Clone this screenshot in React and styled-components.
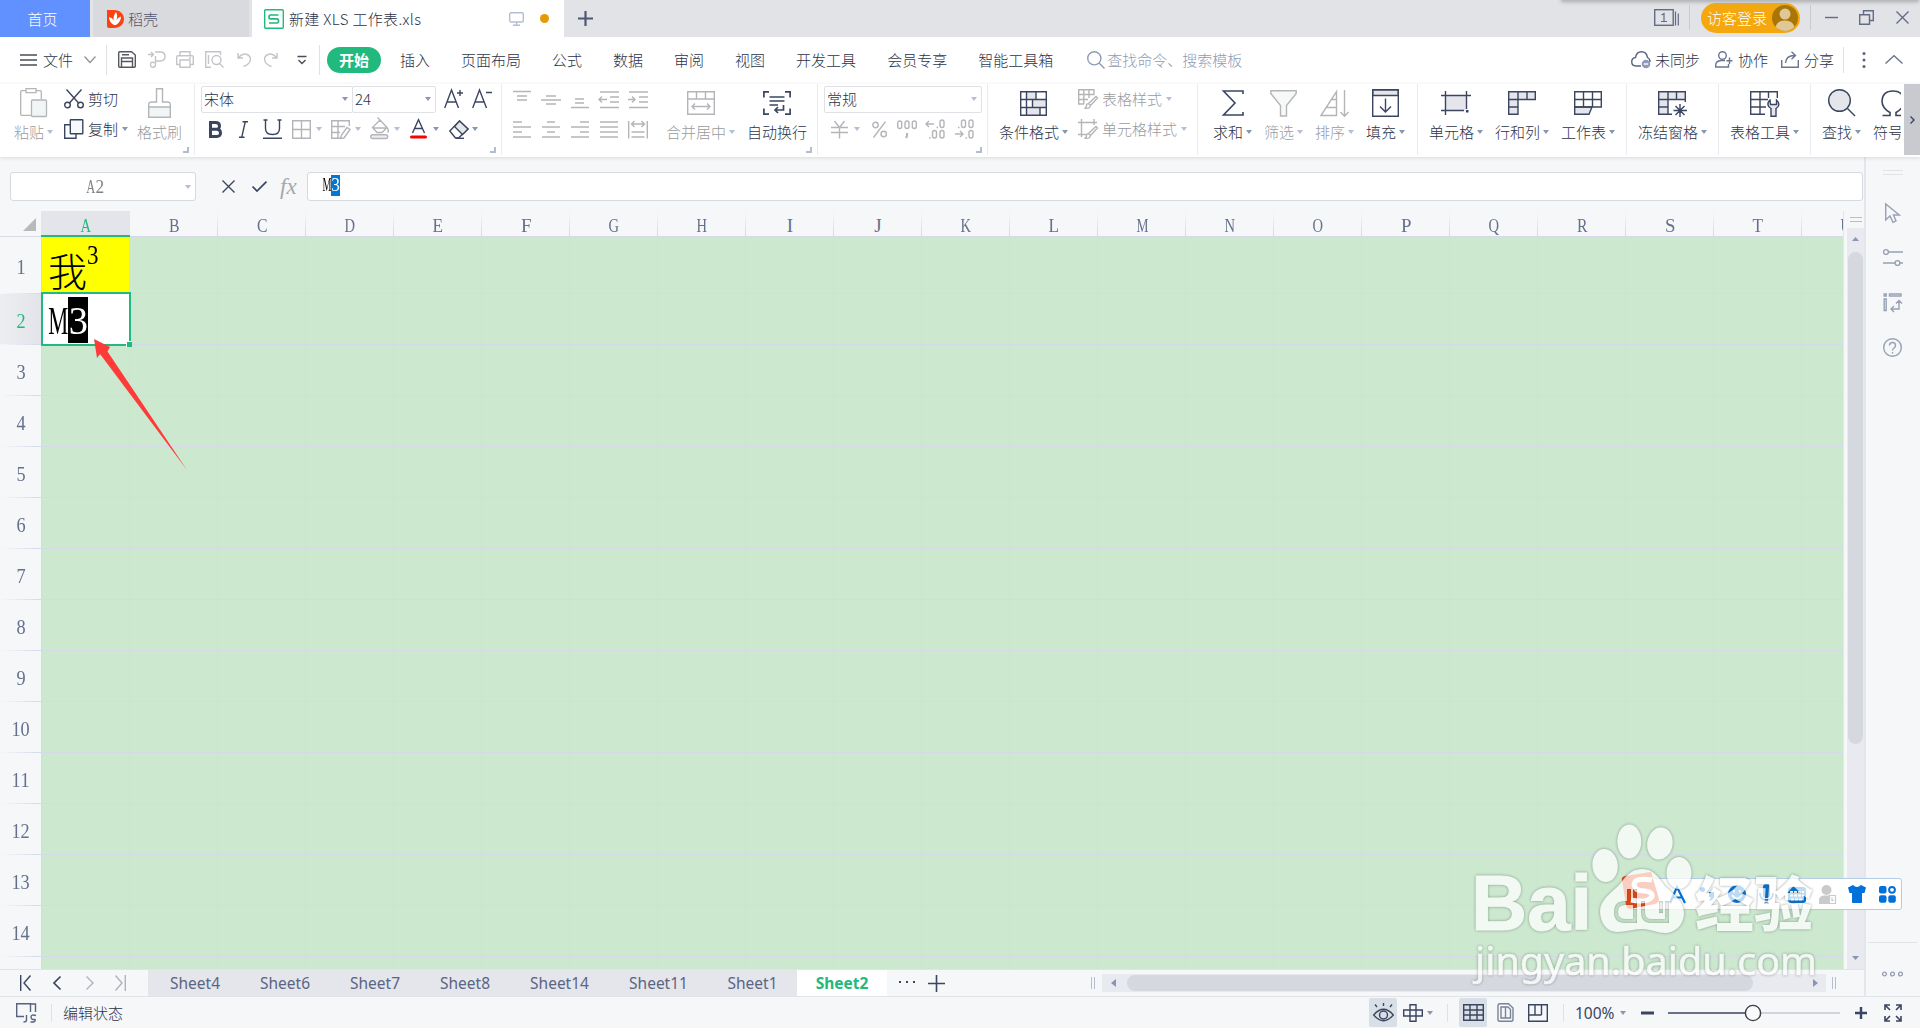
import React from 'react'
import styled, { createGlobalStyle } from 'styled-components';

const INK = '#3b4560';
const MUTED = '#b3b5b8';
const GREEN = '#21b97d';
const LINE = '#d5d9e8';
const PANEL = '#f5f7f9';

const GlobalStyle = createGlobalStyle`
  * {
    box-sizing: border-box;
  }

  body {
    margin: 0;
    overflow: hidden;
    background: ${PANEL};
    font-family: 'Noto Sans', 'Noto Sans CJK SC', sans-serif;
    font-size: 15px;
    line-height: 20px;
    color: ${INK};
  }
`;

const Window = styled.div`
  position: relative;
  display: flex;
  flex-direction: column;
  width: 1920px;
  height: 1028px;
  overflow: hidden;
  white-space: nowrap;
`;

const Svg = styled.svg`
  display: block;
  flex: none;
  overflow: visible;
  margin-left: ${props => props.$ml || 0}px;
  color: ${props => props.$color || INK};
`;

function Glyph({ w, h, ml, color, sw = 1.4, children }) {
  return (
    <Svg
      width={w}
      height={h}
      viewBox={`0 0 ${w} ${h}`}
      fill="none"
      stroke="currentColor"
      strokeWidth={sw}
      $ml={ml}
      $color={color}
    >
      {children}
    </Svg>
  )
}

const Caret = styled.i`
  flex: none;
  width: 0;
  height: 0;
  margin-left: ${props => props.$ml || 0}px;
  border: 3px solid transparent;
  border-top: 4px solid ${props => props.$muted ? '#b4bed5' : '#8895b5'};
  border-bottom: 0;
`;

const Text = styled.span`
  flex: none;
  font-family: 'Noto Sans CJK SC', sans-serif;
  font-size: 15px;
  font-weight: 300;
  line-height: 20px;
  letter-spacing: ${props => props.$spacing || 0}px;
  margin-left: ${props => props.$ml || 0}px;
  color: ${props => props.$muted ? '#9a9ba0' : props.$color || '#2b3348'};
`;

const Rule = styled.div`
  flex: none;
  width: 1px;
  height: ${props => props.$h}px;
  margin-left: ${props => props.$ml || 0}px;
  background: ${props => props.$color || '#dfe1e5'};
`;

/* ---------- title bar ---------- */

const TitleBar = styled.div`
  display: flex;
  flex: none;
  height: 37px;
  background: #e2e3e6;
`;

const HomeTab = styled.div`
  display: flex;
  align-items: center;
  justify-content: center;
  width: 90px;
  padding: 0 5px 0 0;
  background: #6190ff;
`;

const DocTab = styled.div`
  display: flex;
  align-items: center;
  width: ${props => props.$w}px;
  margin-left: 3px;
  padding-left: ${props => props.$pad}px;
  background: ${props => props.$active ? '#ffffff' : '#d9dadd'};
`;

const Dot = styled.div`
  width: 9px;
  height: 9px;
  margin-left: 16px;
  border-radius: 50%;
  background: #e69a05;
`;

const TitleRight = styled.div`
  display: flex;
  align-items: center;
  height: 35px;
  margin-left: auto;
  padding-right: 11px;
`;

const LoginPill = styled.div`
  display: flex;
  align-items: center;
  width: 99px;
  height: 30px;
  margin-left: 11px;
  padding-left: 6px;
  border-radius: 15px;
  background: #f5a80d;
`;

const DropShade = styled.div`
  position: absolute;
  top: -4px;
  left: 1562px;
  width: 356px;
  height: 5px;
  background: #b9babc;
  box-shadow: 0 0 4px 1px #a9aaac;
`;

function TitleTabs() {
  return (
    <>
      <HomeTab><Text $color="#ffffff">首页</Text></HomeTab>
      <DocTab $w={156} $pad={14}>
        <Glyph w={17} h={19} sw={0}>
          <path d="M0 1H7C13 1 17 5 17 10S13 19 7 19H2Q0 19 0 17Z" fill="#fa4310" />
          <path d="M7 16Q2 13 2 8Q6 9 6.500 12Q6 7 9 3Q11 6 9.500 11Q11 8 14 7.500Q14 13 9 16Z" fill="#fff" />
        </Glyph>
        <Text $ml={4} $color="#50566c">稻壳</Text>
      </DocTab>
      <DocTab $w={312} $pad={12} $active>
        <Glyph w={20} h={20} color={GREEN}>
          <rect x=".7" y=".7" width="18.600" height="18.600" rx="1" />
          <path d="M14.500 6H6.500Q5 6 5 8T6.500 9.900H13Q14.500 9.900 14.500 12T13 14H5" strokeWidth="1.700" />
        </Glyph>
        <Text $ml={5} $spacing={0.35}>新建 XLS 工作表.xls</Text>
        <Glyph w={15} h={14} ml={88} color="#b4bdd2">
          <rect x=".7" y=".7" width="13.600" height="9.300" rx="1.500" />
          <path d="M7.500 10V13M4 13.300H11" />
        </Glyph>
        <Dot />
      </DocTab>
      <Glyph w={15} h={37} ml={14} sw={2.2} color="#4d5876">
        <path d="M0 18.500H15M7.500 11V26" />
      </Glyph>
    </>
  )
}

function TitleActions() {
  return (
    <TitleRight>
      <Glyph w={25} h={17} color="#626c86">
        <rect x=".7" y=".7" width="18.500" height="15.600" />
        <path d="M21.500 2.500V16.500M24.300 4.500V16.500M7.500 6L10 4.500V12.500M7 12.500H13" strokeWidth="1.200" />
      </Glyph>
      <Rule $h={25} $ml={10} $color="#c9cbd0" />
      <LoginPill>
        <Text $color="#ffffff">访客登录</Text>
        <Glyph w={26} h={26} ml={5} sw={0}>
          <circle cx="13" cy="13" r="13" fill="#a97506" />
          <circle cx="13" cy="9" r="5.500" fill="#e0c896" />
          <path d="M3.500 22Q5 15.500 13 15.500T22.500 22Q18 26 13 26T3.500 22Z" fill="#e0c896" />
        </Glyph>
      </LoginPill>
      <Rule $h={25} $ml={10} $color="#c9cbd0" />
      <Glyph w={13} h={14} ml={14} color="#626c86"><path d="M0 6.500H13" /></Glyph>
      <Glyph w={15} h={15} ml={21} color="#626c86">
        <path d="M.7 4.700H10.500V14.300H.7ZM4.500 4.700V.7H14.300V10.500H10.500" />
      </Glyph>
      <Glyph w={13} h={13} ml={22} color="#626c86"><path d="M.5 .5L12.500 12.500M12.500 .5L.5 12.500" /></Glyph>
    </TitleRight>
  )
}

/* ---------- menu row ---------- */

const MenuRow = styled.div`
  display: flex;
  flex: none;
  align-items: center;
  height: 47px;
  padding: 0 0 2px 20px;
  background: #ffffff;
`;

const ActiveMenu = styled.div`
  display: flex;
  align-items: center;
  justify-content: center;
  width: 54px;
  height: 26px;
  margin-left: 7px;
  border-radius: 13px;
  background: ${GREEN};

  ${Text} {
    font-weight: 700;
  }
`;

const MenuItems = styled.div`
  display: flex;
  gap: 31px;
  margin-left: 19px;
`;

const MenuRight = styled.div`
  display: flex;
  align-items: center;
  margin-left: auto;
  padding-right: 17px;
`;

const MENUS = ['插入', '页面布局', '公式', '数据', '审阅', '视图', '开发工具', '会员专享', '智能工具箱'];

function QuickAccess() {
  return (
    <>
      <Glyph w={17} h={12} color="#4a4d55"><path d="M0 1H17M0 6H17M0 11H17" /></Glyph>
      <Text $ml={6}>文件</Text>
      <Glyph w={12} h={7} ml={11} color="#8d9096" sw={1.2}><path d="M.5 .5L6 6.500L11.500 .5" /></Glyph>
      <Rule $h={30} $ml={10} />
      <Glyph w={18} h={17} ml={11} color="#55585f">
        <path d="M.7 1.700Q.7 .7 1.700 .7H13.500L17.300 4V15.300Q17.300 16.300 16.300 16.300H1.700Q.7 16.300 .7 15.300ZM3.500 16V7H14.500V16M3.500 10.500H14.500M4 3.700H11" />
      </Glyph>
      <Glyph w={18} h={17} ml={12} color="#c4c5c8">
        <path d="M0 3.500H5M3 1L5.500 3.500L3 6M7 1H12.500Q17 1 17 5.500T12.500 10H7.500V13.500Q7.500 16.300 5 16.300T2.500 13.500T5 11.500H7.500M7.500 5V10" />
      </Glyph>
      <Glyph w={18} h={17} ml={10} color="#c4c5c8">
        <path d="M4 4.500V.7H14V4.500M4 13.500H.7V6Q.7 4.700 2 4.700H16Q17.300 4.700 17.300 6V13.500H14M4 9H14V16.300H4ZM13 7H15" />
      </Glyph>
      <Glyph w={19} h={17} ml={11} color="#c4c5c8">
        <path d="M6 16.300H.7V.7H15.500V4M3.500 4V13M14.500 12.500L18.500 16.500" />
        <circle cx="11.500" cy="9" r="4.500" />
      </Glyph>
      <Glyph w={14} h={15} ml={13} color="#c4c5c8"><path d="M1 1V6H6M1.500 5.500Q6 .8 10 2.500T13.300 8Q13 12 6.500 14.500" /></Glyph>
      <Glyph w={14} h={15} ml={13} color="#c4c5c8"><path d="M13 1V6H8M12.500 5.500Q8 .8 4 2.500T.7 8Q1 12 7.500 14.500" /></Glyph>
      <Glyph w={10} h={10} ml={19} color="#4a4d55"><path d="M.5 1.500H9.500M1.500 5L5 8.500L8.500 5" /></Glyph>
      <Rule $h={30} $ml={12} />
    </>
  )
}

function Menu() {
  return (
    <MenuRow>
      <QuickAccess />
      <ActiveMenu><Text $color="#ffffff">开始</Text></ActiveMenu>
      <MenuItems>
        {MENUS.map(name => <Text key={name}>{name}</Text>)}
      </MenuItems>
      <Glyph w={18} h={18} ml={34} color="#8f9bb8">
        <circle cx="7.300" cy="7.300" r="6.600" />
        <path d="M12 12L17.500 17.500" />
      </Glyph>
      <Text $ml={2} $color="#8f9ab3">查找命令、搜索模板</Text>
      <MenuRight>
        <Glyph w={20} h={17} color="#59637d">
          <path d="M10 15H5Q.7 15 .7 10.500Q1 7 4.500 6.500Q5.500 .7 10.500 .7T16.500 6.500Q19.300 8 19 11" />
          <circle cx="15" cy="13" r="4.300" fill="#8f9bb8" stroke="none" />
          <path d="M12.800 13H17.200" stroke="#fff" />
        </Glyph>
        <Text $ml={4}>未同步</Text>
        <Glyph w={18} h={17} ml={15} color="#6b7590">
          <circle cx="7.500" cy="4.500" r="3.800" />
          <path d="M10 9.500H6Q.7 10 .7 14V16H13.500V13M11.500 9.700H17.500M14.500 6.500V13" />
        </Glyph>
        <Text $ml={5}>协作</Text>
        <Glyph w={18} h={17} ml={13} color="#6b7590">
          <path d="M.7 9V16.300H17.300V9M4.500 12Q5 4.500 13.500 4.500M10.500 .8L14.500 4.500L10.500 8.300" />
        </Glyph>
        <Text $ml={5}>分享</Text>
        <Rule $h={26} $ml={9} />
        <Glyph w={4} h={16} ml={18} sw={0} color="#59637d">
          <circle cx="2" cy="1.500" r="1.500" fill="currentColor" />
          <circle cx="2" cy="8" r="1.500" fill="currentColor" />
          <circle cx="2" cy="14.500" r="1.500" fill="currentColor" />
        </Glyph>
        <Glyph w={18} h={9} ml={19} color="#6b7590"><path d="M.5 8.500L9 .8L17.500 8.500" /></Glyph>
      </MenuRight>
    </MenuRow>
  )
}

/* ---------- ribbon ---------- */

const Ribbon = styled.div`
  position: relative;
  display: flex;
  flex: none;
  height: 73px;
  background: #ffffff;
  box-shadow: 0 1px 4px rgba(60, 70, 90, 0.16);
  z-index: 2;
`;

const GroupBox = styled.div`
  display: flex;
  flex: none;
  flex-direction: column;
  width: ${props => props.$w}px;
  height: 71px;
  overflow: hidden;
  border-right: 1px solid ${props => props.$open ? 'transparent' : '#eaebee'};
`;

const GroupBody = styled.div`
  display: flex;
  height: 62px;
  padding-left: ${props => props.$pad}px;
`;

const Corner = styled.div`
  width: 6px;
  height: 6px;
  margin: 1px 5px 0 auto;
  border-right: 2px solid #b4bccf;
  border-bottom: 2px solid #b4bccf;
`;

function Group({ w, pad, corner, open, children }) {
  return (
    <GroupBox $w={w} $open={open}>
      <GroupBody $pad={pad}>{children}</GroupBody>
      {corner && <Corner />}
    </GroupBox>
  )
}

const BigButton = styled.div`
  display: flex;
  flex: none;
  flex-direction: column;
  align-items: center;
  width: ${props => props.$w}px;
  margin-left: ${props => props.$ml || 0}px;
`;

const IconSlot = styled.div`
  display: flex;
  align-items: center;
  height: 30px;
  margin: 4px 0;
`;

const Row = styled.div`
  display: flex;
  align-items: center;
`;

function Tool({ label, ml, muted, caret = true, w, children }) {
  return (
    <BigButton $ml={ml} $w={w || label.length * 15 + (caret ? 9 : 0)}>
      <IconSlot>{children}</IconSlot>
      <Row>
        <Text $muted={muted}>{label}</Text>
        {caret && <Caret $ml={3} $muted={muted} />}
      </Row>
    </BigButton>
  )
}

const Stack = styled.div`
  display: flex;
  flex: none;
  flex-direction: column;
  gap: 2px;
  padding-top: 1px;
  margin-left: ${props => props.$ml || 0}px;
`;

const StackRow = styled.div`
  display: flex;
  align-items: center;
  height: 28px;
  gap: ${props => props.$gap || 0}px;
  padding-left: ${props => props.$pad || 0}px;
`;

const Combo = styled.div`
  display: flex;
  align-items: center;
  justify-content: space-between;
  width: ${props => props.$w}px;
  height: 27px;
  margin-right: -1px;
  padding: 0 4px 1px 2px;
  border: 1px solid #dfe1e6;
  border-radius: 2px;
`;

const MoreButton = styled.div`
  display: flex;
  align-items: center;
  justify-content: center;
  width: 16px;
  height: 71px;
  margin-left: auto;
  background: #c9cad0;
`;

const lines = (rows) => rows.map(([x1, x2, y]) => `M${x1} ${y}H${x2}`).join('');

const ALIGN_TOP = [
  { id: 'top', d: lines([[1, 19, 1.5], [5, 15, 6], [5, 15, 10]]) },
  { id: 'middle', d: lines([[5, 15, 6], [0, 20, 10], [5, 15, 14]]) },
  { id: 'bottom', d: lines([[5, 14, 9], [5, 14, 13], [1, 19, 17.5]]) },
  { id: 'outdent', d: lines([[1, 20, 2], [11, 20, 7], [11, 20, 12], [1, 20, 17.5]]) + 'M0 9.500H8M3 6.500L0 9.500L3 12.500' },
  { id: 'indent', d: lines([[1, 20, 2], [11, 20, 7], [11, 20, 12], [1, 20, 17.5]]) + 'M0 9.500H7M4 6.500L7 9.500L4 12.500' },
];

const ALIGN_BOTTOM = [
  { id: 'left', d: lines([[1, 10, 2], [1, 19, 7], [1, 10, 12], [1, 19, 17]]) },
  { id: 'center', d: lines([[6, 14, 2], [1, 19, 7], [6, 14, 12], [1, 19, 17]]) },
  { id: 'right', d: lines([[10, 19, 2], [1, 19, 7], [10, 19, 12], [1, 19, 17]]) },
  { id: 'justify', d: lines([[1, 19, 2], [1, 19, 7], [1, 19, 12], [1, 19, 17]]) },
  { id: 'spread', d: 'M.7 1V18.500M19.300 1V18.500M3.500 4H16.500M6.500 1L3.500 4L6.500 7M13.500 1L16.500 4L13.500 7M3.500 12H16.500M3.500 17H16.500' },
];

function ClipboardGroup() {
  return (
    <Group w={195} pad={14} corner>
      <Tool label="粘贴" muted>
        <Glyph w={27} h={30} color={MUTED} sw={1.3}>
          <path d="M6 2.700H1.700Q.7 2.700 .7 3.700V26.300Q.7 27.300 1.700 27.300H11M16 2.700H20.300Q21.300 2.700 21.300 3.700V11M6 .7H16V4.700H6Z" />
          <rect x="11.500" y="12" width="15" height="16.500" rx="1" fill="#f2f5f5" />
        </Glyph>
      </Tool>
      <Stack $ml={11}>
        <StackRow>
          <Glyph w={20} h={20}>
            <path d="M2.500 .5L15 14.500M17.500 .5L5 14.500" />
            <circle cx="3.500" cy="16" r="2.800" />
            <circle cx="16.500" cy="16" r="2.800" />
          </Glyph>
          <Text $ml={4}>剪切</Text>
        </StackRow>
        <StackRow>
          <Glyph w={20} h={20}>
            <path d="M6 5.700H.7V19.300H12V15" />
            <rect x="6.300" y=".7" width="12.500" height="14" rx=".5" fill="#f7f8fa" />
          </Glyph>
          <Text $ml={4}>复制</Text>
          <Caret $ml={4} />
        </StackRow>
      </Stack>
      <Tool label="格式刷" ml={9} muted caret={false}>
        <Glyph w={23} h={30} color={MUTED}>
          <path d="M.7 19H22.300V29.300H.7Z" fill="#f2f5f5" />
          <path d="M.7 19V16Q.7 14.500 3 14H8.500V.7H14.500V14H20Q22.300 14.500 22.300 16V19" />
        </Glyph>
      </Tool>
    </Group>
  )
}

function FontGroup() {
  return (
    <Group w={307} pad={6} corner>
      <Stack>
        <StackRow>
          <Combo $w={152}><Text>宋体</Text><Caret /></Combo>
          <Combo $w={84}><Text>24</Text><Caret /></Combo>
          <Glyph w={20} h={20} ml={9}><path d="M.7 19L7.500 1L14.500 19M3 13H12.200M13 4H19M16 1V7" /></Glyph>
          <Glyph w={20} h={20} ml={8}><path d="M.7 19L7.500 1L14.500 19M3 13H12.200M14 3.500H20" /></Glyph>
        </StackRow>
        <StackRow $pad={7}>
          <Glyph w={14} h={17} sw={3}><path d="M2.500 1.500H7.500Q11.500 1.500 11.500 5T7.500 8.300H2.500ZM2.500 8.300H8.500Q12.500 8.300 12.500 12T8.500 15.500H2.500Z" /></Glyph>
          <Glyph w={9} h={17} ml={17}><path d="M3.500 .7H9M0 16.300H5.500M6.300 .7L2.700 16.300" /></Glyph>
          <Glyph w={19} h={20} ml={15}><path d="M.5 1H4.500M14.500 1H18.500M2.500 1V9.500Q2.500 15.500 9.500 15.500T16.500 9.500V1M0 19.300H19" /></Glyph>
          <Glyph w={19} h={19} ml={10} color={MUTED}><path d="M.7 .7H18.300V18.300H.7ZM9.500 .7V18.300M.7 9.500H18.300" /></Glyph>
          <Caret $ml={5} $muted />
          <Glyph w={20} h={19} ml={9} color={MUTED}><path d="M9 18.300H.7V.7H18.300V6M.7 6.500H14M.7 12.500H9M7 .7V18M16 7.500L19 9.500L13 18L9.500 18.500L10.500 15Z" /></Glyph>
          <Caret $ml={4} $muted />
          <Glyph w={19} h={20} ml={9} color={MUTED}><path d="M2.500 8.500L10 1L17 8.500L12 13.500H7ZM3 9H16.500M10 1L7.500 -1.500M17 8.500Q19.500 12 17.500 13.500" /><rect x=".7" y="15.700" width="17" height="3.800" rx="1.900" fill="#eee" /></Glyph>
          <Caret $ml={5} $muted />
          <Glyph w={17} h={20} ml={10}><path d="M2.500 14L8.500 .7L14.500 14M4.500 9.500H12.500" /><path d="M1.500 18H15.500" stroke="#fe0000" strokeWidth="3" strokeLinecap="round" /></Glyph>
          <Caret $ml={6} />
          <Glyph w={20} h={19} ml={10}><path d="M.8 11L10.500 1L19 9L9.500 18H6.500Z" /><path d="M5.500 6.500L10.500 1L19 9L13.500 14.500Z" fill="#e4e6ec" /><path d="M7 18.300H15" /></Glyph>
          <Caret $ml={3} />
        </StackRow>
      </Stack>
    </Group>
  )
}

function AlignGroup() {
  return (
    <Group w={316} pad={10} corner>
      <Stack>
        <StackRow $gap={9}>
          {ALIGN_TOP.map(({ id, d }) => <Glyph key={id} w={20} h={19} color={MUTED}><path d={d} /></Glyph>)}
        </StackRow>
        <StackRow $gap={9}>
          {ALIGN_BOTTOM.map(({ id, d }) => <Glyph key={id} w={20} h={19} color={MUTED}><path d={d} /></Glyph>)}
        </StackRow>
      </Stack>
      <Tool label="合并居中" ml={18} muted>
        <Glyph w={28} h={24} color={MUTED}>
          <path d="M.7 .7H27.300V23.300H.7ZM.7 8H27.300M9.500 .7V8M18.500 .7V8M5 15.500H23M8 12.500L5 15.500L8 18.500M20 12.500L23 15.500L20 18.500" />
        </Glyph>
      </Tool>
      <Tool label="自动换行" ml={12} caret={false}>
        <Glyph w={28} h={24} sw={1.7}>
          <path d="M6 .9H.9V6.500M22 .9H27.100V6.500M.9 17.500V23.100H6M27.100 17.500V23.100H22M6.500 6H21.500M6.500 10H21.500M6.500 14H15M20.500 14V19H12M15 16L12 19L15 22" />
        </Glyph>
      </Tool>
    </Group>
  )
}

function NumberGroup() {
  return (
    <Group w={170} pad={6} corner>
      <Stack>
        <StackRow><Combo $w={158}><Text>常规</Text><Caret $muted /></Combo></StackRow>
        <StackRow $pad={7}>
          <Glyph w={17} h={19} color={MUTED}><path d="M3.500 1L8.500 7.500L13.500 1M0 7.500H17M0 12.500H17M8.500 7.500V18.500" /></Glyph>
          <Caret $ml={6} $muted />
          <Glyph w={15} h={17} ml={12} color={MUTED}><path d="M13.500 .7L1.500 16.500" /><circle cx="3.500" cy="4" r="2.700" /><circle cx="11.700" cy="13" r="2.700" /></Glyph>
          <Glyph w={20} h={19} ml={10} color={MUTED}>
            <rect x=".7" y="1" width="4" height="7.500" rx="2" />
            <rect x="8" y="1" width="4" height="7.500" rx="2" />
            <rect x="15.300" y="1" width="4" height="7.500" rx="2" />
            <path d="M10 13V16L9 18" strokeWidth="2" />
          </Glyph>
          <Glyph w={19} h={20} ml={9} color={MUTED}>
            <path d="M0 5H8M3 2L0 5L3 8M10.500 8.500H12M3 19H4.500" />
            <rect x="14" y="1" width="4" height="7.500" rx="2" />
            <rect x="6.500" y="11.500" width="4" height="7.500" rx="2" />
            <rect x="14" y="11.500" width="4" height="7.500" rx="2" />
          </Glyph>
          <Glyph w={19} h={20} ml={10} color={MUTED}>
            <path d="M0 15H8M5 12L8 15L5 18M10.500 19H12M3 8.500H4.500" />
            <rect x="14" y="11.500" width="4" height="7.500" rx="2" />
            <rect x="6.500" y="1" width="4" height="7.500" rx="2" />
            <rect x="14" y="1" width="4" height="7.500" rx="2" />
          </Glyph>
        </StackRow>
      </Stack>
    </Group>
  )
}

function StyleGroup() {
  return (
    <Group w={210} pad={11}>
      <Tool label="条件格式">
        <Glyph w={27} h={25}>
          <path d="M7 1H16V8H7ZM12 9H26V16H12ZM7 17H20V24H7Z" fill="#e4e6ec" stroke="none" />
          <path d="M.7 .7H26.300V24.300H.7ZM.7 8.500H26.300M.7 16.500H26.300M6.500 .7V24.300M16 .7V8.500M12.500 8.500V16.500M20 16.500V24.300" />
        </Glyph>
      </Tool>
      <Stack $ml={10}>
        <StackRow>
          <Glyph w={20} h={20} color={MUTED}>
            <path d="M6 15H.7V.7H16V6M.7 5.500H16M.7 10.500H10M5.800 .7V15M11 .7V9M18 7.500L19.500 9L12.500 16.500L10.500 14.500ZM10.500 14.500Q8 15 8.500 17Q8.500 19 6.500 19.300Q12 20 12.500 16.500" />
          </Glyph>
          <Text $ml={4} $muted>表格样式</Text>
          <Caret $ml={4} $muted />
        </StackRow>
        <StackRow>
          <Glyph w={20} h={20} color={MUTED}>
            <path d="M0 3.500H19M3.500 0V18M0 15.500H8M16 0V6M18 7.500L19.500 9L12.500 16.500L10.500 14.500ZM10.500 14.500Q8 15 8.500 17Q8.500 19 6.500 19.300Q12 20 12.500 16.500" />
          </Glyph>
          <Text $ml={4} $muted>单元格样式</Text>
          <Caret $ml={4} $muted />
        </StackRow>
      </Stack>
    </Group>
  )
}

function EditGroup() {
  return (
    <Group w={220} pad={15}>
      <Tool label="求和">
        <Glyph w={22} h={26} sw={1.6}><path d="M21 4V1H1.500L13 13L1.500 25H21V22" /></Glyph>
      </Tool>
      <Tool label="筛选" ml={12} muted>
        <Glyph w={27} h={27} color={MUTED}><path d="M.8 .8H26.200V3.500L16.500 15.500V26H10.500V15.500L.8 3.500Z" fill="#f7f8f8" /></Glyph>
      </Tool>
      <Tool label="排序" ml={12} muted>
        <Glyph w={29} h={27} color={MUTED}><path d="M1 25.500L16.500 1.500V25.500ZM6 17.500H16.500M11 9.500H16.500M24.500 0V26M20.500 22L24.500 26.300L28.500 22" /></Glyph>
      </Tool>
      <Tool label="填充" ml={12}>
        <Glyph w={27} h={28}>
          <path d="M.7 .7H26.300V6.500H.7Z" fill="#e4e6ec" />
          <path d="M.7 .7H26.300V27.300H.7ZM13.500 9.500V22.500M8 17.500L13.500 23L19 17.500" />
        </Glyph>
      </Tool>
    </Group>
  )
}

function SheetGroup() {
  return (
    <Group w={209} pad={11}>
      <Tool label="单元格">
        <Glyph w={30} h={24}>
          <path d="M4.500 4.500H25.500V19.500H4.500Z" fill="#e4e6ec" stroke="none" />
          <path d="M0 4.500H30M4.500 0V24M0 19.500H23M25.500 0V18" />
          <rect x="25" y="19" width="2.500" height="2.500" fill="currentColor" stroke="none" />
        </Glyph>
      </Tool>
      <Tool label="行和列" ml={12}>
        <Glyph w={28} h={24}>
          <path d="M.7 .7H27.300V8.500H10V23.300H.7Z" fill="#e4e6ec" />
          <path d="M10 .7V8.500M19 .7V8.500M.7 8.500H10M.7 16H10" />
        </Glyph>
      </Tool>
      <Tool label="工作表" ml={12}>
        <Glyph w={28} h={24}>
          <path d="M.7 16H18L15 23.300H.7Z" fill="#e4e6ec" />
          <path d="M.7 .7H27.300V16H.7ZM.7 8.500H27.300M9.500 .7V16M18.500 .7V16" />
        </Glyph>
      </Tool>
    </Group>
  )
}

function ViewGroups() {
  return (
    <>
      <Group w={92} pad={11}>
        <Tool label="冻结窗格">
          <Glyph w={29} h={27}>
            <path d="M.7 1.700H27.300V9.500H10V24.300H.7Z" fill="#e4e6ec" stroke="none" />
            <path d="M14 24.300H.7V1.700H27.300V12M.7 9.500H27.300M.7 17H10M10 1.700V24.300M18.500 1.700V9.500M22 14V27M15.500 20.500H29M17.500 16L26.500 25M26.500 16L17.500 25" />
          </Glyph>
        </Tool>
      </Group>
      <Group w={92} pad={11}>
        <Tool label="表格工具">
          <Glyph w={29} h={27}>
            <path d="M15 24.300H.7V1.700H27.300V8M.7 9.500H18M.7 17H16M10 1.700V24.300M18.500 1.700V8" />
            <path d="M20 10Q17.500 12 18 15Q18.500 17 21 18.500V26.300H26V18.500Q28.500 17 28.800 15Q29 12 26.500 10V14.500H20.500Z" fill="#e4e6ec" />
          </Glyph>
        </Tool>
      </Group>
      <Group w={91} pad={11} open>
        <Tool label="查找">
          <Glyph w={27} h={28}>
            <circle cx="11.500" cy="11.500" r="10.800" fill="#e4e6ec" />
            <path d="M19.500 19.500L27 27" />
          </Glyph>
        </Tool>
        <Tool label="符号" ml={12}>
          <Glyph w={24} h={27} sw={1.6}><path d="M1.500 25.500H9V22.500Q1 18 1 11Q1.500 1 12 1T23 11Q23 18 15 22.500V25.500H22.500" /></Glyph>
        </Tool>
      </Group>
    </>
  )
}

/* ---------- formula bar ---------- */

const Main = styled.div`
  display: flex;
  flex: none;
  height: 839px;
`;

const Workbook = styled.div`
  display: flex;
  flex-direction: column;
  width: 1864px;
`;

const FormulaRow = styled.div`
  display: flex;
  flex: none;
  align-items: center;
  height: 54px;
  padding: 5px 0 0 10px;
`;

const NameBox = styled.div`
  display: flex;
  align-items: center;
  justify-content: flex-end;
  width: 186px;
  height: 29px;
  padding-right: 4px;
  background: #ffffff;
  border: 1px solid #d6d9df;
  border-radius: 3px;
`;

const NameText = styled.div`
  flex: 1;
  display: flex;
  justify-content: center;
  padding-right: 6px;
`;

const FormulaInput = styled.div`
  display: flex;
  align-items: center;
  width: 1556px;
  height: 29px;
  margin-left: 9px;
  padding: 0 0 2px 14px;
  background: #ffffff;
  border: 1px solid #d6d9df;
  border-radius: 3px;
`;

const Fx = styled.span`
  margin-left: 13px;
  width: 18px;
  font-family: 'Liberation Serif', serif;
  font-size: 23px;
  font-style: italic;
  color: #a5a7ab;
`;

/* Advance widths of the serif face in em; every glyph is squeezed to the same pitch. */
const EM = {
  A: 0.722, B: 0.667, C: 0.667, D: 0.722, E: 0.611, F: 0.556, G: 0.722, H: 0.722, I: 0.333, J: 0.389, K: 0.722,
  L: 0.611, M: 0.889, N: 0.722, O: 0.722, P: 0.556, Q: 0.722, R: 0.667, S: 0.556, T: 0.611, U: 0.722,
};

const PitchBox = styled.span`
  display: inline-flex;
  justify-content: center;
  width: ${props => props.$pitch}px;
  font-family: 'Liberation Serif', serif;
  font-size: ${props => props.$size}px;
  line-height: ${props => props.$lh || props.$size}px;
  color: ${props => props.$color || '#65708c'};
  background: ${props => props.$bg || 'transparent'};
`;

const Squeezed = styled.span`
  flex: none;
  transform: scaleX(${props => props.$scale});
`;

function Narrow({ text, size, pitch, color, bg, lh }) {
  return text.split('').map((ch, i) => (
    <PitchBox key={i} $size={size} $pitch={pitch} $color={color} $bg={bg} $lh={lh}>
      <Squeezed $scale={Math.min(1, pitch / (size * (EM[ch] || 0.52)))}>{ch}</Squeezed>
    </PitchBox>
  ))
}

function FormulaBar() {
  return (
    <FormulaRow>
      <NameBox>
        <NameText><Narrow text="A2" size={19} pitch={9} color="#808286" /></NameText>
        <Caret $muted />
      </NameBox>
      <Glyph w={13} h={13} ml={26}><path d="M.5 .5L12.500 12.500M12.500 .5L.5 12.500" /></Glyph>
      <Glyph w={15} h={11} ml={17} sw={1.7}><path d="M.5 5.500L5 10L14.500 .7" /></Glyph>
      <Fx>fx</Fx>
      <FormulaInput>
        <Narrow text="M" size={18} pitch={9} color="#000" lh={21} />
        <Narrow text="3" size={18} pitch={9} color="#fff" bg="#0078d7" lh={21} />
      </FormulaInput>
    </FormulaRow>
  )
}

/* ---------- grid ---------- */

const GridArea = styled.div`
  display: flex;
  flex: none;
  height: 758px;
`;

const Sheet = styled.div`
  display: flex;
  flex-direction: column;
  width: 1843px;
  overflow: hidden;
`;

const SheetRow = styled.div`
  display: flex;
  flex: none;
  height: ${props => props.$h}px;
`;

const SelectAll = styled.div`
  display: flex;
  flex: none;
  width: 41px;
  height: 26px;
  padding: 7px 0 0 23px;
  border-bottom: 1px solid ${LINE};
`;

const ColHead = styled.div`
  display: flex;
  flex: none;
  align-items: center;
  justify-content: center;
  width: ${props => props.$active ? 89 : 88}px;
  padding-top: ${props => props.$active ? 5 : 4}px;
  border-bottom: ${props => props.$active ? `2px solid ${GREEN}` : `1px solid ${LINE}`};
  background: ${props => props.$active
    ? '#e4e5ea'
    : `linear-gradient(${PANEL}, ${LINE}) right / 1px 100% no-repeat`};
`;

const RowHead = styled.div`
  display: flex;
  flex: none;
  align-items: center;
  justify-content: center;
  width: 42px;
  padding-top: 3px;
  border-right: 1px solid ${LINE};
  background:
    linear-gradient(90deg, ${PANEL}, ${LINE}) bottom / 100% 1px no-repeat
    ${props => props.$active ? ', linear-gradient(90deg, #eceef1, #e2e4ea)' : ''};
`;

const Cell = styled.div`
  position: relative;
  display: flex;
  flex: none;
  width: 88px;
  border-right: 1px solid ${LINE};
  border-bottom: 1px solid ${LINE};
  background: ${props => props.$bg || '#cce8cf'};
`;

const Selection = styled.div`
  position: absolute;
  inset: -2px -2px -2px -1px;
  z-index: 1;
  display: flex;
  align-items: center;
  padding: 2px 0 0 5px;
  border: 2px solid ${GREEN};
  background: #ffffff;
`;

const FillHandle = styled.div`
  position: absolute;
  right: -3px;
  bottom: -3px;
  width: 6px;
  height: 6px;
  border: solid #ffffff;
  border-width: 1px 0 0 1px;
  background: ${GREEN};
`;

const BigHanzi = styled.span`
  margin: 12px 0 0 6px;
  font-family: 'Noto Sans CJK SC', sans-serif;
  font-size: 39px;
  font-weight: 300;
  line-height: 40px;
  color: #000000;
`;

const Super = styled.span`
  margin-top: 5px;
`;

const COLS = 'ABCDEFGHIJKLMNOPQRSTU'.split('');
const ROWS = Array.from({ length: 15 }, (_, i) => i + 1);

function CellContent({ name }) {
  if (name === 'A1') {
    return (
      <>
        <BigHanzi>我</BigHanzi>
        <Super><Narrow text="3" size={27} pitch={12} color="#000" /></Super>
      </>
    )
  }
  if (name === 'A2') {
    return (
      <Selection>
        <Narrow text="M" size={41} pitch={20} color="#000" lh={46} />
        <Narrow text="3" size={41} pitch={20} color="#fff" bg="#000" lh={46} />
        <FillHandle />
      </Selection>
    )
  }
  return null
}

function Grid() {
  return (
    <Sheet>
      <SheetRow $h={26}>
        <SelectAll><Glyph w={13} h={13} sw={0}><path d="M13 0V13H0Z" fill="#b8b9bb" /></Glyph></SelectAll>
        {COLS.map(c => (
          <ColHead key={c} $active={c === 'A'}>
            <Narrow text={c} size={19} pitch={c === 'M' ? 12 : 10.5} color={c === 'A' ? GREEN : undefined} />
          </ColHead>
        ))}
      </SheetRow>
      {ROWS.map(r => (
        <SheetRow key={r} $h={r === 1 ? 57 : 51}>
          <RowHead $active={r === 2}>
            {r < 15 && <Narrow text={String(r)} size={20} pitch={9.5} color={r === 2 ? GREEN : undefined} />}
          </RowHead>
          {COLS.map(c => (
            <Cell key={c} $bg={c + r === 'A1' ? '#ffff00' : undefined}>
              <CellContent name={c + r} />
            </Cell>
          ))}
        </SheetRow>
      ))}
    </Sheet>
  )
}

const ScrollColumn = styled.div`
  display: flex;
  flex-direction: column;
  align-items: center;
  width: 21px;
  padding-left: 3px;
  border-left: 1px solid #e3e5ea;
`;

const SplitHandle = styled.div`
  flex: none;
  width: 12px;
  height: 5px;
  margin: 6px 0;
  border: solid #b4bccf;
  border-width: 1px 0;
`;

const Track = styled.div`
  display: flex;
  flex: 1;
  flex-direction: column;
  align-items: center;
  width: 17px;
  padding: 9px 0 9px;
  background: #e9eaef;
`;

const Thumb = styled.div`
  width: 15px;
  height: 492px;
  margin: 11px 0 auto;
  border-radius: 8px;
  background: #d6d8e0;
`;

/* ---------- sheet tabs ---------- */

const TabsBar = styled.div`
  display: flex;
  flex: none;
  align-items: center;
  height: 27px;
  border-top: 1px solid #e1e3e8;
`;

const NavIcons = styled.div`
  display: flex;
  align-items: center;
  width: 148px;
  padding-left: 20px;
`;

const TabStrip = styled.div`
  display: flex;
  height: 100%;
  padding-left: 2px;
  background: #e5e6ec;
`;

const SheetTab = styled.div`
  display: flex;
  align-items: center;
  justify-content: center;
  width: ${props => props.$w}px;
  height: 26px;
  font-size: 15.5px;
  font-weight: ${props => props.$active ? 700 : 400};
  color: ${props => props.$active ? GREEN : '#5a6583'};
  background: ${props => props.$active ? '#ffffff' : 'transparent'};
`;

const HScroll = styled.div`
  display: flex;
  align-items: center;
  width: 724px;
  height: 18px;
  margin-left: 7px;
  padding: 0 8px 0 9px;
  background: #e9eaef;
`;

const HThumb = styled.div`
  width: 626px;
  height: 16px;
  margin: 0 auto 0 11px;
  border-radius: 8px;
  background: #d6d8e0;
`;

const Grip = styled.div`
  width: 4px;
  height: 12px;
  margin-left: ${props => props.$ml}px;
  border: solid #b4bccf;
  border-width: 0 1px;
`;

const SHEETS = [
  ['Sheet4', 90], ['Sheet6', 90], ['Sheet7', 90], ['Sheet8', 90],
  ['Sheet14', 99], ['Sheet11', 99], ['Sheet1', 89], ['Sheet2', 90],
];

function SheetTabs() {
  return (
    <TabsBar>
      <NavIcons>
        <Glyph w={11} h={16}><path d="M.7 0V16M10.500 .5L4 8L10.500 15.500" /></Glyph>
        <Glyph w={8} h={14} ml={22} sw={1.7}><path d="M7.500 .5L1 7L7.500 13.500" /></Glyph>
        <Glyph w={8} h={14} ml={25} color="#b0b3ba"><path d="M.5 .5L7 7L.5 13.500" /></Glyph>
        <Glyph w={11} h={16} ml={21} color="#b0b3ba"><path d="M10.300 0V16M.5 .5L7 8L.5 15.500" /></Glyph>
      </NavIcons>
      <TabStrip>
        {SHEETS.map(([name, w]) => <SheetTab key={name} $w={w} $active={name === 'Sheet2'}>{name}</SheetTab>)}
      </TabStrip>
      <Glyph w={16} h={2} ml={12} sw={2}><path d="M0 0H2M7 0H9M14 0H16" /></Glyph>
      <Glyph w={17} h={17} ml={13} sw={1.6}><path d="M0 8.500H17M8.500 0V17" /></Glyph>
      <Grip $ml={146} />
      <HScroll>
        <Glyph w={5} h={8} sw={0}><path d="M5 0V8L0 4Z" fill="#8895b5" /></Glyph>
        <HThumb />
        <Glyph w={5} h={8} sw={0}><path d="M0 0V8L5 4Z" fill="#8895b5" /></Glyph>
      </HScroll>
      <Grip $ml={6} />
    </TabsBar>
  )
}

/* ---------- side panel ---------- */

const SidePanel = styled.div`
  display: flex;
  flex-direction: column;
  align-items: center;
  width: 56px;
  padding: 13px 1px 0 0;
  border-left: 2px solid #e4e6ec;
`;

const SideHandle = styled.div`
  flex: none;
  width: 20px;
  height: 5px;
  margin-bottom: 27px;
  border: solid #e1e4e5;
  border-width: 1px 0;
`;

const SideItem = styled.div`
  display: flex;
  flex: none;
  align-items: center;
  height: 21px;
  margin-bottom: 24px;
`;

const SideFooter = styled.div`
  display: flex;
  justify-content: center;
  width: 49px;
  height: 54px;
  margin-top: auto;
  padding-top: 28px;
  border-top: 1px solid #dfe2e6;
`;

function Side() {
  const color = '#98a1b4';
  return (
    <SidePanel>
      <SideHandle />
      <SideItem>
        <Glyph w={15} h={20} color={color}><path d="M.7 1V17L5 13L8 19.300L11 18L8.500 12H14.300Z" /></Glyph>
      </SideItem>
      <SideItem>
        <Glyph w={20} h={17} color={color}><circle cx="3" cy="3" r="2.400" /><circle cx="14.500" cy="14" r="2.400" /><path d="M5.500 3H20M0 14H12M17 14H20" /></Glyph>
      </SideItem>
      <SideItem>
        <Glyph w={19} h={19} color={color}>
          <path d="M1.200 1H3.200V3H1.200ZM6.500 1H18V3H6.500ZM1.200 6H3.200V17.500H1.200ZM8 16H16V8M11 13L8 16L11 19M13 10.500L16 7.500L19 10.500" />
        </Glyph>
      </SideItem>
      <SideItem>
        <Glyph w={19} h={19} color={color}>
          <circle cx="9.500" cy="9.500" r="8.800" />
          <path d="M6.500 7.500Q6.500 4.500 9.500 4.500T12.500 7.500Q12.500 9 11 10T9.500 12.500M9.500 14V15.500" />
        </Glyph>
      </SideItem>
      <SideFooter>
        <Glyph w={21} h={6} color={color}><circle cx="2.500" cy="3" r="1.900" /><circle cx="10.500" cy="3" r="1.900" /><circle cx="18.500" cy="3" r="1.900" /></Glyph>
      </SideFooter>
    </SidePanel>
  )
}

/* ---------- status bar ---------- */

const StatusBar = styled.div`
  display: flex;
  flex: none;
  align-items: center;
  height: 32px;
  padding-left: 16px;
  border-top: 1px solid #e1e3e8;
`;

const StatusRight = styled.div`
  display: flex;
  align-items: center;
  height: 31px;
  margin-left: auto;
  padding-right: 18px;
`;

const ViewButton = styled.div`
  display: flex;
  align-items: center;
  justify-content: center;
  width: 28px;
  height: 29px;
  margin-left: ${props => props.$ml || 0}px;
  border-radius: 2px;
  background: #d9dfe6;
`;

const Zoom = styled.span`
  width: 40px;
  margin-left: 11px;
  font-size: 15.5px;
`;

function Status() {
  return (
    <StatusBar>
      <Glyph w={21} h={20} color="#59637d">
        <path d="M8 13.500H.7V.7H14.500V2M10.500 12V17Q10.500 19 7.500 19M20 12.500Q15 11 15 14T19 16.500Q20 19.500 14.500 19M14.500 9V1H19.500V9" />
      </Glyph>
      <Rule $h={18} $ml={14} />
      <Text $ml={11}>编辑状态</Text>
      <StatusRight>
        <ViewButton>
          <Glyph w={21} h={19}>
            <path d="M.7 12Q10.500 .5 20.300 12Q10.500 23.500 .7 12ZM10.500 0V3M2 1.500L4 4M19 1.500L17 4" />
            <circle cx="10.500" cy="12" r="4" />
          </Glyph>
        </ViewButton>
        <Glyph w={20} h={18} ml={6}><path d="M7 .7H13V17.300H7ZM.7 6H19.300V12H.7Z" /></Glyph>
        <Caret $ml={4} />
        <Rule $h={18} $ml={14} />
        <ViewButton $ml={11}>
          <Glyph w={21} h={17}><path d="M.7 .7H20.300V16.300H.7ZM.7 6H20.300M.7 11H20.300M7 .7V16.300M14 .7V16.300" /></Glyph>
        </ViewButton>
        <Glyph w={17} h={19} ml={10} color="#7a8296">
          <path d="M1 3V16.500Q1 18.300 3 18.300H14Q16 18.300 16 16.500V5L11.500 .7H3Q1 .7 1 3ZM4 4H8.500V15H4ZM8.500 4H11L13.500 6.500V15H8.500Z" />
        </Glyph>
        <Glyph w={20} h={18} ml={14}><path d="M.7 .7H19.300V17.300H.7ZM7 .7V11M13.500 .7V11M.7 11H13.500" /></Glyph>
        <Rule $h={18} $ml={15} />
        <Zoom>100%</Zoom>
        <Caret $ml={5} />
        <Glyph w={13} h={4} ml={15} sw={3}><path d="M0 2H13" /></Glyph>
        <Glyph w={172} h={18} ml={14}>
          <path d="M0 9H77" />
          <path d="M93 9H172" stroke="#c4c8d2" />
          <circle cx="85" cy="9" r="7.600" fill="#fafafa" stroke="#3a3d45" />
        </Glyph>
        <Glyph w={12} h={12} ml={15} sw={2.4}><path d="M0 6H12M6 0V12" /></Glyph>
        <Glyph w={18} h={18} ml={17} sw={1.6}>
          <path d="M1 6V1H6M1 1L6 6M12 1H17V6M17 1L12 6M1 12V17H6M1 17L6 12M17 12V17H12M17 17L12 12" />
        </Glyph>
      </StatusRight>
    </StatusBar>
  )
}

/* ---------- things floating above the window ---------- */

const Pointer = styled.svg`
  position: absolute;
  left: 94px;
  top: 339px;
  z-index: 3;
`;

const InputBar = styled.div`
  position: absolute;
  left: 1628px;
  top: 878px;
  z-index: 3;
  display: flex;
  align-items: center;
  width: 274px;
  height: 32px;
  background: #ffffff;
  border: 1px solid #b5cce6;
  border-radius: 3px;
`;

const Watermark = styled.svg`
  position: absolute;
  left: 1465px;
  top: 810px;
  z-index: 4;
  opacity: 0.74;
  filter: drop-shadow(0 0 1.5px rgba(70, 90, 75, 0.75));
`;

const MarkText = styled.text`
  font-family: ${props => props.$family}, sans-serif;
  font-size: ${props => props.$size}px;
  font-weight: ${props => props.$weight || 400};
  fill: #ffffff;
  stroke: #ffffff;
  stroke-width: ${props => props.$edge || 0}px;
`;

const BLUE = '#0070da';

function InputMethodBar() {
  return (
    <InputBar>
      <Glyph w={40} h={38} ml={-8} sw={0}>
        <path d="M1 5Q0 2 4 1L30 -3L38 24Q38 28 34 29L9 34Q6 34 5 30Z" fill="#e8430c" />
        <path d="M31 5Q13 2 13 10Q14 16 24 16Q32 17 31 22Q26 28 10 25" fill="none" stroke="#fff" strokeWidth="5" />
      </Glyph>
      <Glyph w={17} h={17} ml={8} sw={2.2} color={BLUE}><path d="M1 17L8 1L16 17M4 11.500H13" /></Glyph>
      <Glyph w={14} h={14} ml={14} sw={0}>
        <circle cx="2.500" cy="2.500" r="2.500" fill={BLUE} />
        <path d="M9 5H14V10Q13 13 9.500 14L11 10H9Z" fill={BLUE} />
      </Glyph>
      <Glyph w={18} h={18} ml={14} sw={0}>
        <circle cx="9" cy="9" r="9" fill={BLUE} />
        <path d="M4 10Q9 17 14 10M6 5V7.500M12 5V7.500" stroke="#fff" strokeWidth="1.600" />
      </Glyph>
      <Glyph w={15} h={20} ml={13} sw={1.5} color={BLUE}>
        <rect x="4" y="0" width="7" height="14" rx="3" fill={BLUE} stroke="none" />
        <path d="M1 9Q1 16 7.500 16T14 9M5 19.300H10" />
      </Glyph>
      <Glyph w={18} h={16} ml={14} sw={0}>
        <rect width="18" height="16" rx="3" y="1" fill={BLUE} />
        <path d="M2 6H16M2 9.500H16M3 13.500H15" stroke="#fff" strokeWidth="2" strokeDasharray="3 1" />
      </Glyph>
      <Glyph w={17} h={19} ml={13} sw={0}>
        <circle cx="7.500" cy="5" r="5" fill="#c9cacb" />
        <path d="M0 19V15Q0 11 5 10.500H10V19Z" fill="#c9cacb" />
        <path d="M10.500 10.500H16.500V18.500H10.500ZM13 12.500V15.500H15" stroke="#c9cacb" strokeWidth="1.200" />
      </Glyph>
      <Glyph w={18} h={18} ml={12} sw={0}>
        <path d="M5 0Q9 4 13 0L18 2.500L16.500 8H14V17Q14 18 13 18H5Q4 18 4 17V8H1.500L0 2.500Z" fill={BLUE} />
      </Glyph>
      <Glyph w={17} h={17} ml={13} sw={0}>
        <rect width="7.500" height="7.500" rx="2" fill={BLUE} />
        <rect y="9.300" width="7.500" height="7.500" rx="2" fill={BLUE} />
        <rect x="9.300" y="9.300" width="7.500" height="7.500" rx="2" fill={BLUE} />
        <circle cx="13" cy="3.800" r="2.900" stroke={BLUE} strokeWidth="2" />
      </Glyph>
    </InputBar>
  )
}

function Brand() {
  return (
    <Watermark width="370" height="180" viewBox="0 0 370 180">
      <mask id="pad-cut" maskUnits="userSpaceOnUse" x="0" y="0" width="370" height="180">
        <rect width="370" height="180" fill="#fff" />
        <g fill="none" stroke="#000" strokeWidth="4">
          <path d="M170 79V111H160Q151 111 151 102T160 93H170M164 79V93" />
          <path d="M178 91V102Q178 111 186 111H202V91M196 91V103" />
        </g>
      </mask>
      <MarkText x="6" y="119.500" $family="'Liberation Sans'" $size={77} $weight={700} $edge={1} textLength="121" lengthAdjust="spacingAndGlyphs">Bai</MarkText>
      <g fill="#ffffff">
        <ellipse cx="140" cy="55.500" rx="12.700" ry="16.500" transform="rotate(-6 140 55)" />
        <ellipse cx="164.300" cy="31.500" rx="12" ry="17" />
        <ellipse cx="195" cy="33.500" rx="12.700" ry="16.200" transform="rotate(10 195 33)" />
        <ellipse cx="214" cy="63" rx="12.500" ry="16" />
        <path
          mask="url(#pad-cut)"
          d="M177 59C190 59 195 70 201 77C210 85 219 92 219 103C219 116 209 123 200 123C192 123 186 119 177 119C168 119 161 122 152 122C142 122 135 113 135 101C135 90 147 82 154 75C160 68 165 59 177 59Z"
        />
      </g>
      <MarkText x="230" y="116" $family="'Noto Sans CJK SC'" $size={59} $weight={900} textLength="118" lengthAdjust="spacingAndGlyphs">经验</MarkText>
      <MarkText x="10" y="165" $family="'Noto Sans'" $size={39} $edge={0.6} textLength="342" lengthAdjust="spacingAndGlyphs">jingyan.baidu.com</MarkText>
    </Watermark>
  )
}

export default function App() {
  return (
    <Window>
      <GlobalStyle />
      <TitleBar>
        <TitleTabs />
        <TitleActions />
      </TitleBar>
      <Menu />
      <Ribbon>
        <ClipboardGroup />
        <FontGroup />
        <AlignGroup />
        <NumberGroup />
        <StyleGroup />
        <EditGroup />
        <SheetGroup />
        <ViewGroups />
        <MoreButton><Glyph w={5} h={8}><path d="M.5 .5L4 4L.5 7.500" /></Glyph></MoreButton>
      </Ribbon>
      <Main>
        <Workbook>
          <FormulaBar />
          <GridArea>
            <Grid />
            <ScrollColumn>
              <SplitHandle />
              <Track>
                <Glyph w={7} h={4} sw={0}><path d="M0 4H7L3.500 0Z" fill="#8895b5" /></Glyph>
                <Thumb />
                <Glyph w={7} h={4} sw={0}><path d="M0 0H7L3.500 4Z" fill="#8895b5" /></Glyph>
              </Track>
            </ScrollColumn>
          </GridArea>
          <SheetTabs />
        </Workbook>
        <Side />
      </Main>
      <Status />
      <DropShade />
      <Pointer width="94" height="132" viewBox="0 0 94 132">
        <path d="M0 0L16 8L13.500 12.500L93 131L6 15L3 19Z" fill="#fd3c3a" />
      </Pointer>
      <InputMethodBar />
      <Brand />
    </Window>
  )
}
